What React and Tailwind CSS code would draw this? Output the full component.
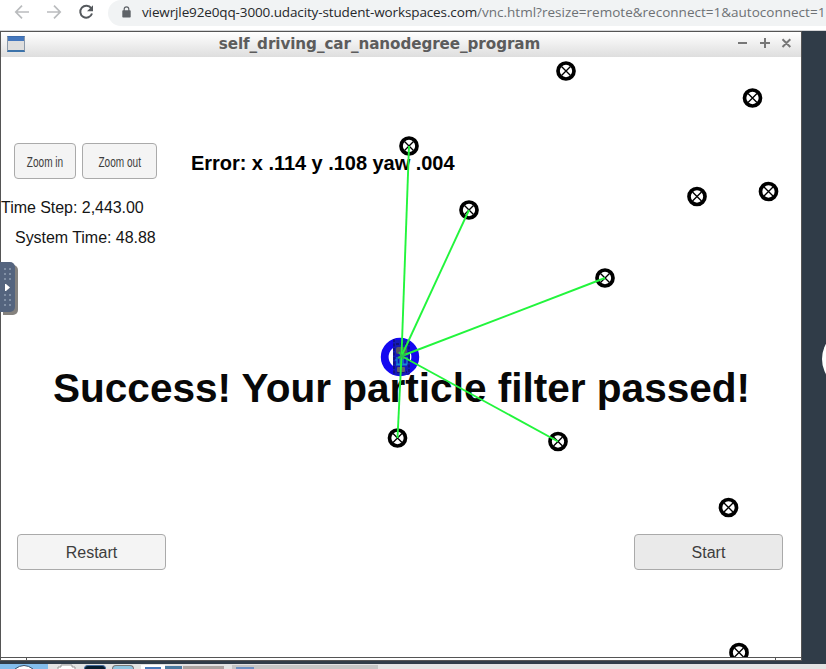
import React from "react";

const landmarks = [
  [566, 71], [752.5, 98], [409, 146], [469, 210], [697, 196.5], [768.5, 191.5],
  [605, 278], [397.5, 438], [558, 441.5], [728.5, 507.5], [739, 652.5],
];
const sensed = [[409, 146], [469, 210], [605, 278], [558, 441.5], [397.5, 438]];

function BrowserBar() {
  return (
    <div className="flex h-[31px] shrink-0 items-start border-b border-[#d5d6d8] bg-white">
      <svg className="h-[26px] w-[108px] shrink-0" viewBox="0 0 108 26" fill="none">
        <path d="M29 12H16M22 5.7L15.8 12L22 18.3" stroke="#babcbe" strokeWidth="1.7" />
        <path d="M47 12H60M54 5.7L60.2 12L54 18.3" stroke="#babcbe" strokeWidth="1.7" />
        <path d="M91.2 8.2A6 6 0 1 0 92 13.5" stroke="#55595d" strokeWidth="2" />
        <path d="M93 5.2V11.2H87Z" fill="#55595d" />
      </svg>
      <div className="flex h-[26px] flex-1 items-center overflow-hidden rounded-l-full bg-[#f1f3f4] pl-[14px]">
        <svg className="mb-[2px] h-[12px] w-[9px] shrink-0" viewBox="0 0 9 12">
          <path d="M2.2 5V3.1a2.3 2.3 0 0 1 4.6 0V5" fill="none" stroke="#5f6368" strokeWidth="1.2" />
          <rect x="0.3" y="4.3" width="8.4" height="7.2" rx="0.8" fill="#5f6368" />
        </svg>
        <div className="ml-[11px] whitespace-nowrap pb-[2px] font-['Open_Sans',sans-serif] text-[13.5px] leading-5 text-[#6d7175]">
          <span className="tracking-[-0.125px] text-[#26282b]">viewrjle92e0qq-3000.udacity-student-workspaces.com</span>
          <span className="tracking-[0.01px]">/vnc.html?resize=remote&amp;reconnect=1&amp;autoconnect=1</span>
        </div>
      </div>
    </div>
  );
}

function TitleBar() {
  return (
    <div className="flex h-[25px] shrink-0 items-center bg-linear-to-b from-white to-[#dedede] pl-[6px] pr-[8px]">
      <div className="mb-[1px] h-4 w-[18px] border border-[#8a98a8] border-b-2 border-b-[#3c73aa] border-t-[#3c6cad] bg-linear-to-b from-[#4477bd] from-30% to-[#dedede] to-30%" />
      <div className="flex-1 pr-[3px] pb-[2px] text-center font-['DejaVu_Sans',sans-serif] text-[15.2px] font-bold leading-[20px] tracking-[-0.08px] text-[#5c5c5c]">
        <span>self_driving_car_nanodegree_program</span>
      </div>
      <svg className="mb-[3px] h-[12px] w-[56px]" viewBox="0 0 56 12" fill="none" stroke="#777" strokeWidth="2">
        <path d="M1 6H10M23 6H33M28 1V11M45.5 2.2L53.3 10M53.3 2.2L45.5 10" />
      </svg>
    </div>
  );
}

function Particles() {
  return (
    <svg className="pointer-events-none absolute inset-0 h-[600px] w-[800px]" viewBox="1 57 800 600" fill="none">
      {landmarks.map(([x, y]) => (
        <g key={`${x}-${y}`}>
          <circle cx={x} cy={y} r="8" stroke="#000" strokeWidth="3.7" />
          <path d={`M${x - 4.5} ${y - 4.5}L${x + 4.5} ${y + 4.5}M${x + 4.5} ${y - 4.5}L${x - 4.5} ${y + 4.5}`} stroke="#000" strokeWidth="1.4" />
        </g>
      ))}
      <circle cx="400" cy="357" r="15.3" stroke="#1408f0" strokeWidth="7.8" />
      <rect x="393" y="340" width="17" height="35" rx="2" fill="#1519b8" />
      <path d="M394 339V374M409 342V374M396 344h11M397 372h10" stroke="#10106a" strokeWidth="1.3" strokeDasharray="3 1.5" />
      <rect x="396" y="347" width="11" height="7" rx="2" fill="#555662" />
      <rect x="397" y="367" width="8" height="5" rx="1" fill="#62626c" />
      <path d="M397 357v7h3v-5h3v5h4v-7M395 360h2M396 365h11" stroke="#168bd4" strokeWidth="1.2" />
      {sensed.map(([x, y]) => (
        <path key={`${x}-${y}`} d={`M401.5 356L${x} ${y}`} stroke="#22f53c" strokeWidth="1.9" />
      ))}
      <path d="M399 352l5 7M398 358l8-4" stroke="#2dbe4b" strokeWidth="2" />
    </svg>
  );
}

const button = "flex shrink-0 items-center justify-center rounded-[4px] border-[1.5px] border-[#aaa] text-[#3d3d3d]";

function Simulator() {
  return (
    <div className="relative flex h-[600px] shrink-0 flex-col overflow-hidden bg-white font-['Liberation_Sans',sans-serif] text-[#151515]">
      <div className="mt-[86px] flex h-[36px] pl-[13px]">
        <button className={`${button} w-[62px] bg-[#f4f4f4] pt-[2px] text-[15.5px]`}>
          <span className="scale-x-[0.65] whitespace-nowrap">Zoom in</span>
        </button>
        <button className={`${button} ml-[6px] w-[75px] bg-[#f4f4f4] pt-[2px] text-[15.5px]`}>
          <span className="scale-x-[0.65] whitespace-nowrap">Zoom out</span>
        </button>
        <div className="ml-[34px] mt-[8px] whitespace-nowrap text-[20px] font-bold leading-[24px] tracking-[-0.04px] text-black">
          Error: x .114 y .108 yaw .004
        </div>
      </div>
      <div className="mt-[19px] whitespace-nowrap text-[16px] leading-5 tracking-[-0.04px]">Time Step: 2,443.00</div>
      <div className="mt-[10px] whitespace-nowrap pl-[14px] text-[16px] leading-5 tracking-[-0.04px]">System Time: 48.88</div>
      <div className="mt-[110px] h-[60px] whitespace-nowrap pl-[52px] text-[40.55px] font-bold leading-[60px] text-[#080808]">
        <span>Success! Your particle filter passed!</span>
      </div>
      <div className="mt-[116px] flex justify-between pl-4 pr-[18px]">
        <button className={`${button} h-9 w-[149px] bg-[#f4f4f4] pt-[2px] text-[16px]`}>Restart</button>
        <button className={`${button} h-9 w-[149px] bg-[#eaeaea] pt-[2px] text-[16px]`}>Start</button>
      </div>
      <Particles />
    </div>
  );
}

function Taskbar() {
  return (
    <div className="flex h-[5px] shrink-0 items-end overflow-hidden bg-[#e3e3e3]">
      <div className="flex h-full w-12 justify-center bg-[#83bdec]">
        <svg className="h-[5px] w-5" viewBox="0 0 20 5"><path d="M1 5Q10 -2 19 5" fill="#fff" stroke="#38506a" /></svg>
      </div>
      <svg className="ml-[9px] h-[5px] w-[19px]" viewBox="0 0 19 5"><path d="M1 5V3H4V1H15V3H18V5" fill="#fff" stroke="#999" /></svg>
      <div className="ml-2 h-1 w-[22px] rounded-t border border-b-0 border-[#466b9c] bg-[#071e30]" />
      <div className="ml-[6px] h-1 w-[22px] rounded-t border border-b-0 border-[#777] bg-[#90c5e1]" />
      <div className="ml-[7px] flex h-1 w-6 items-end justify-center bg-white"><div className="h-[2px] w-[16px] bg-[#4b7abb]" /></div>
      <div className="h-[3px] w-[17px] bg-[#4b7aa0]" />
      <div className="ml-[1px] h-[3px] w-[41px] bg-[#aaa3a0]" />
      <div className="ml-2 flex h-1 w-[146px] items-end bg-[#c5c5c5] pl-1"><div className="h-[2px] w-[18px] bg-[#6e91c3]" /></div>
    </div>
  );
}

export default function App() {
  return (
    <div className="relative flex h-[669px] w-[826px] flex-col overflow-hidden bg-[#303c48]">
      <BrowserBar />
      <div className="flex h-[630px] w-[802px] shrink-0 flex-col border-x border-t border-[#555]">
        <TitleBar />
        <Simulator />
        <div className="flex h-[4px] shrink-0 border-b border-t border-[#555] bg-white">
          <div className="w-[26px] border-r border-[#555]" />
          <div className="w-[749px] border-r border-[#555]" />
        </div>
      </div>
      <div className="h-[3px] shrink-0" />
      <Taskbar />
      <div className="absolute left-0 top-[262px] flex h-[50px] w-[15px] flex-col items-center justify-between rounded-r-[5px] bg-[#54647e] py-[6px] shadow-[3px_3px_0_#85827e]">
        {[0, 1].map((group) => (
          <React.Fragment key={group}>
            <div className={group ? "order-2 grid grid-cols-2 gap-x-[3px] gap-y-[3px]" : "grid grid-cols-2 gap-x-[3px] gap-y-[3px]"}>
              {[0, 1, 2, 3, 4, 5].map((dot) => <i key={dot} className="size-[2px] bg-[#8190a5]" />)}
            </div>
          </React.Fragment>
        ))}
        <svg className="order-1 h-[7px] w-[5px]" viewBox="0 0 5 7"><path d="M0 0H1L5 3.5L1 7H0Z" fill="#fff" /></svg>
      </div>
      <div className="absolute left-[822px] top-[328px] size-[62px] rounded-full bg-white" />
    </div>
  );
}
